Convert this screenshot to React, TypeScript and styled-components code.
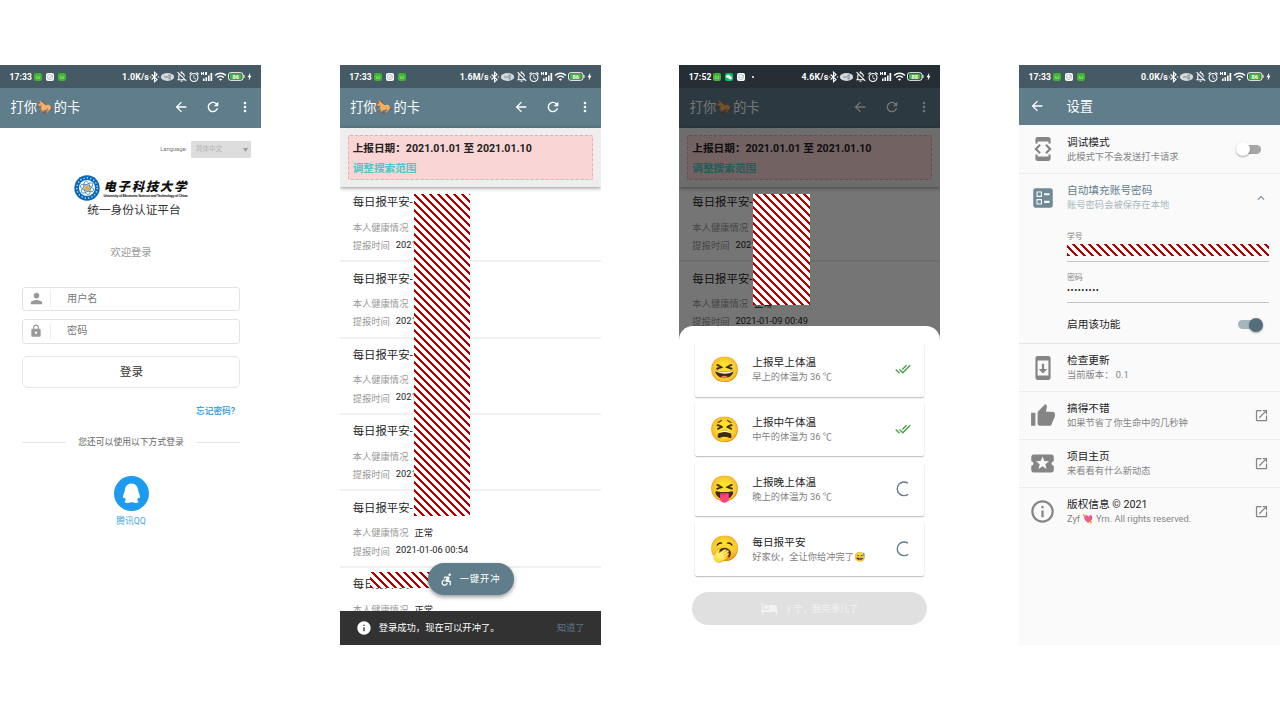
import React from "react";
import styled, { createGlobalStyle, css } from "styled-components";
import {
  MdArrowBack, MdRefresh, MdMoreVert, MdPerson, MdLock, MdInfo, MdHotel, MdDoneAll,
  MdDeveloperMode, MdBallot, MdSystemUpdate, MdThumbUp, MdLocalPlay, MdInfoOutline,
  MdOpenInNew, MdExpandLess, MdOutlineNotificationsOff, MdAlarm, MdWifi,
  MdBolt, MdAccessibleForward,
} from "react-icons/md";

const Global = createGlobalStyle`
  * { box-sizing: border-box; }
  body { margin: 0; background: #fff; font-family: Roboto, "Noto Sans CJK SC", "Noto Color Emoji", sans-serif; }
  svg { display: block; flex: none; }
`;

const Page = styled.main`
  width: 1280px; height: 720px; padding: 65px 0 75px;
  display: flex; justify-content: space-between; overflow: hidden;
`;
const Phone = styled.section<{ $bg?: string }>`
  position: relative; width: 261px; height: 580px; overflow: hidden;
  display: flex; flex-direction: column; background: ${p => p.$bg ?? "#fff"};
`;
const Text = styled.span<{ $s: number; $c?: string; $w?: number; $lh?: number; $ls?: number; $m?: string }>`
  display: block; white-space: nowrap; font-size: ${p => p.$s}px; color: ${p => p.$c ?? "#222"};
  font-weight: ${p => p.$w ?? 400}; line-height: ${p => p.$lh ?? 14}px; letter-spacing: ${p => p.$ls ?? 0}px;
  margin: ${p => p.$m ?? 0};
`;

/* Status bar */
const StatusRow = styled.div<{ $dark?: boolean }>`
  height: 23px; flex: none; display: flex; align-items: center; padding: 0 7px 0 9.5px;
  background: ${p => (p.$dark ? "#242e34" : "#455a64")}; color: #fff;
`;
const Badges = styled.div`display: flex; gap: 4px; margin-left: 2px; flex: 1; align-items: center;`;
const Badge = styled.i<{ $kind: string }>`
  width: 8px; height: 8px; border-radius: 2px; display: grid; place-items: center;
  background: ${p => (p.$kind === "task" ? "#fff" : p.$kind === "chat" ? "#07c160" : "#3fb52f")};
`;
const Tray = styled.div`display: flex; align-items: center;`;
const Dot = styled.i`width: 2px; height: 2px; border-radius: 1px; background: #fff; margin-left: 3px;`;

const BadgeIcon = ({ kind }: { kind: string }) => (
  <Badge $kind={kind}>
    <svg width="8" height="8" viewBox="0 0 8 8" fill="none">
      {kind === "task" && <><circle cx="4" cy="4" r="2.6" stroke="#8fbcf0" strokeWidth=".8" /><path d="M2.7 4l1.1 1.1 2.6-3" stroke="#e6a53a" strokeWidth=".9" /></>}
      {kind === "chat" && <><ellipse cx="3.2" cy="3.4" rx="2.2" ry="1.7" fill="#fff" /><ellipse cx="5.2" cy="5" rx="1.8" ry="1.4" fill="#fff" /></>}
      {kind === "app" && <path d="M2.3 2.8v2.7h3.4V2.8M2.3 3.9h3.4" stroke="#8fe07e" strokeWidth=".7" />}
    </svg>
  </Badge>
);

const StatusBar = ({ time, speed, badges, dark, more }: { time: string; speed: string; badges: string[]; dark?: boolean; more?: boolean }) => (
  <StatusRow $dark={dark}>
    <Text $s={8.6} $c="#fff" $w={700} $lh={12} $ls={0.1}>{time}</Text>
    <Badges>{badges.map((b, i) => <BadgeIcon key={i} kind={b} />)}{more && <Dot />}</Badges>
    <Tray>
      <Text $s={8.8} $c="#fff" $w={700} $lh={12} $ls={0.15}>{speed}</Text>
      <svg width="11" height="12" viewBox="0 0 11 12" fill="none" stroke="#fff" strokeWidth="1.1"><path d="M2.6 3.5l5.4 5-2.500 2.300V1.200L8 3.500l-5.400 5" /><path d="M.8 6h1.400M8.800 6h1.400" /></svg>
      <svg width="15" height="10" viewBox="-.5 0 15 10"><ellipse cx="7" cy="5" rx="6.700" ry="3.900" fill="#d3d9dc" /><path d="M3.500 5h7M8 3.200h2.500M8 6.800h2.500" stroke="#607078" strokeWidth=".8" /></svg>
      <MdOutlineNotificationsOff size={13} />
      <MdAlarm size={12} />
      <svg width="14" height="11" viewBox="0 0 14 11" fill="#fff"><path d="M1 1h1v1h1V1h1v3H3V3H2v1H1zM5 1h2v3H5zM3 7.500h1.600V10H3zM5.500 6.300h1.600V10H5.500zM8 4.500h1.600V10H8zM10.500 2h1.700v8h-1.700z" /></svg>
      <MdWifi size={13} />
      <svg width="18" height="9" viewBox="-1 0 18 9"><rect x=".5" y=".7" width="14.500" height="7.600" rx="2.200" fill="none" stroke="#fff" /><rect x="2" y="2.100" width="11.500" height="4.800" rx=".8" fill="#43b83c" /><path d="M16 3v3" stroke="#fff" /><text x="7.700" y="6.500" textAnchor="middle" fontSize="5.600" fontWeight="700" fill="#fff">{dark ? "88" : "86"}</text></svg>
      <MdBolt size={9} />
    </Tray>
  </StatusRow>
);

/* App bar */
const Bar = styled.header<{ $h?: number }>`
  height: ${p => p.$h ?? 40}px; flex: none; display: flex; align-items: center; color: #fff;
  background: #607d8b; padding: 0 8px 2px 10.5px;
`;
const Actions = styled.div`margin-left: auto; display: flex; align-items: center; gap: 16px;`;
const Emoji = styled.span<{ $s: number }>`font-family: "Noto Color Emoji", sans-serif; font-size: ${p => p.$s}px; line-height: 1;`;
const MainBar = () => (
  <Bar>
    <Text $s={13.2} $c="#fff" $lh={20} $m="2px 0 0">打你<Emoji $s={13.6}>🐎</Emoji>的卡</Text>
    <Actions><MdArrowBack size={16} /><MdRefresh size={16} /><MdMoreVert size={16} /></Actions>
  </Bar>
);

/* Login */
const Login = styled.div`padding: 12px 21px 0 22px; display: flex; flex-direction: column; align-items: center;`;
const Language = styled.div`align-self: flex-end; margin-right: -11px; height: 18px; display: flex; align-items: center; gap: 4px;`;
const Select = styled.div`
  width: 60px; height: 17px; background: #ddd; border-radius: 1px; padding: 0 3px 0 5px;
  display: flex; align-items: center; justify-content: space-between;
`;
const Brand = styled.div`display: flex; align-items: center; gap: 4px; margin-top: 17px; height: 26px;`;
const School = styled.div`display: flex; flex-direction: column; align-items: flex-start; width: 85px;`;
const Calligraphy = styled.span`
  font: italic 900 12.4px/16px "Noto Sans CJK SC", sans-serif; letter-spacing: 1.7px; white-space: nowrap; color: #111;
`;
const English = styled.span`font: 700 3.6px/5px "Liberation Sans Narrow", "Liberation Sans", sans-serif; white-space: nowrap; letter-spacing: -.26px; color: #111;`;
const Field = styled.div`
  width: 218px; height: 24.5px; border: 1.5px solid #e3e3e3; border-radius: 3px; margin-bottom: 8px;
  display: flex; align-items: center; color: #999; padding-left: 5px;
`;
const FieldIcon = styled.span`width: 16px; display: grid; place-items: center;`;
const FieldDivider = styled.i`width: 1px; height: 17px; background: #eee; margin: 0 16px 0 6px;`;
const LoginButton = styled.div`
  width: 218px; height: 32px; border: 1px solid #e8e8e8; border-radius: 6px; margin-top: 4px;
  display: grid; place-items: center;
`;
const Forgot = styled.div`align-self: flex-end; margin: 16px 5px 0 0;`;
const Alternatives = styled.div`width: 218px; display: flex; justify-content: space-between; align-items: center; margin-top: 17.5px;`;
const Rule = styled.i`width: 44px; height: 1px; background: #e4e4e4;`;

const LoginScreen = () => (
  <Phone>
    <StatusBar time="17:33" speed="1.0K/s" badges={["app", "task", "app"]} />
    <MainBar />
    <Login>
      <Language>
        <Text $s={5.8} $c="#777" $lh={8}>Language:</Text>
        <Select><Text $s={6.5} $c="#b4b4b4" $lh={9}>简体中文</Text><Text $s={5} $c="#999" $lh={8}>▼</Text></Select>
      </Language>
      <Brand>
        <svg width="26" height="26" viewBox="0 0 26 26" fill="none">
          <circle cx="13" cy="13" r="12.7" fill="#0868b8" />
          <circle cx="13" cy="13" r="10.2" stroke="#dbe9f5" strokeWidth="1.4" strokeDasharray="1.2 2.2" />
          <circle cx="13" cy="13" r="8" fill="#fff" />
          <g stroke="#2d82c6" strokeWidth=".8"><ellipse cx="13" cy="13" rx="7" ry="3" transform="rotate(20 13 13)" /><ellipse cx="13" cy="13" rx="7" ry="3" transform="rotate(80 13 13)" /><ellipse cx="13" cy="13" rx="7" ry="3" transform="rotate(140 13 13)" /></g>
          <path d="M14 9.3l.7 2.5 2.500.8-2.200 1.300.1 2.700-2.100-1.700-2.500.8.900-2.400-1.500-2.200 2.700.1z" fill="#efa72f" />
        </svg>
        <School><Calligraphy>电子科技大学</Calligraphy><English>University of Electronic Science and Technology of China</English></School>
      </Brand>
      <Text $s={11.7} $c="#333" $lh={18} $m="0 0 0 6px">统一身份认证平台</Text>
      <Text $s={10.3} $c="#999" $lh={16} $m="26px 0 25.5px">欢迎登录</Text>
      <Field><FieldIcon><MdPerson size={17} /></FieldIcon><FieldDivider /><Text $s={10.2} $c="#777">用户名</Text></Field>
      <Field><FieldIcon><MdLock size={14} /></FieldIcon><FieldDivider /><Text $s={10.2} $c="#777">密码</Text></Field>
      <LoginButton><Text $s={11.7} $c="#333" $lh={18} $m="1px 0 0 1px">登录</Text></LoginButton>
      <Forgot><Text $s={8.7} $c="#1b97e0" $w={500}>忘记密码?</Text></Forgot>
      <Alternatives><Rule /><Text $s={8.8} $c="#666">您还可以使用以下方式登录</Text><Rule /></Alternatives>
      <svg width="35" height="35" viewBox="0 0 35 35" style={{ marginTop: 27 }}>
        <circle cx="17.5" cy="17.5" r="17.5" fill="#1d9bf0" />
        <path fill="#fff" d="M17.5 7.5c-4.200 0-6.300 3.100-6.600 6.600-.2 2.300-1.900 4.600-1.900 7 0 1.300.6 1.400 1.700.4.200 1 .7 1.800 1.300 2.500-1.200.5-1.500 1.300-1.300 2 .5 1.300 5.300 1.200 6.800.1 1.500 1.100 6.300 1.200 6.800-.1.200-.7-.1-1.500-1.300-2 .6-.7 1.100-1.500 1.300-2.500 1.100 1 1.700.9 1.700-.4 0-2.400-1.700-4.700-1.900-7-.3-3.500-2.400-6.600-6.600-6.600z" />
      </svg>
      <Text $s={8.7} $c="#41a8e5" $m="3px 0 0">腾讯QQ</Text>
    </Login>
  </Phone>
);

/* Report list */
const hatch = css`background: repeating-linear-gradient(45deg, #b00000 0 2.4px, #fff 2.4px 5.657px);`;
const Search = styled.div`
  position: relative; z-index: 1; height: 59px; flex: none; background: #eee; padding: 7px 8px;
  box-shadow: 0 1px 4px rgba(0,0,0,.45);
`;
const Range = styled.div`height: 45px; border: 1px dashed #efa9ab; border-radius: 2px; background: #fad5d5; padding: 2.5px 4px;`;
const Item = styled.div`height: 76.4px; flex: none; border-bottom: 2px solid #f0f0f0; padding: 8.5px 13px 0 13px;`;
const Line = styled.div`display: flex; gap: 6px; height: 18.5px; align-items: center;`;
const Redaction = styled.div<{ $x: number; $y: number; $w: number; $h: number }>`
  position: absolute; z-index: 3; left: ${p => p.$x}px; top: ${p => p.$y}px; width: ${p => p.$w}px; height: ${p => p.$h}px;
  ${hatch}
`;
const Items = styled.div`display: flex; flex-direction: column; margin-top: -1.2px;`;

const Reports = ({ times }: { times: string[] }) => (
  <>
    <Search>
      <Range>
        <Text $s={10.65} $w={700} $lh={20}>上报日期：2021.01.01 至 2021.01.10</Text>
        <Text $s={10.65} $w={700} $c="#4fc6c8" $lh={20}>调整搜索范围</Text>
      </Range>
    </Search>
    <Items>
      {times.map((t, i) => (
        <Item key={i}>
          <Text $s={11.4} $lh={16} $m="0 0 8px">每日报平安-</Text>
          <Line><Text $s={9.3} $c="#999">本人健康情况</Text><Text $s={9.25}>正常</Text></Line>
          {t && <Line><Text $s={9.3} $c="#999">提报时间</Text><Text $s={9.3} $m="-3px 0 0">{t}</Text></Line>}
        </Item>
      ))}
    </Items>
  </>
);

const Fab = styled.div`
  position: absolute; z-index: 4; left: 88px; top: 498px; width: 86px; height: 32px; border-radius: 16px;
  background: #607d8b; color: #fff; display: flex; align-items: center; gap: 6px; padding-left: 11px;
  box-shadow: 0 2px 4px rgba(0,0,0,.4);
`;
const Snackbar = styled.div`
  position: absolute; z-index: 4; left: 0; right: 0; bottom: 0; height: 34px; background: #323232; color: #fff;
  display: flex; align-items: center; padding: 0 16px; gap: 7px;
`;
const Grow = styled.div`flex: 1;`;

const ReportScreen = () => (
  <Phone>
    <StatusBar time="17:33" speed="1.6M/s" badges={["app", "task", "app"]} />
    <MainBar />
    <Reports times={["2021-01-10 00:49", "2021-01-09 00:49", "2021-01-08 00:52", "2021-01-07 00:51", "2021-01-06 00:54", ""]} />
    <Redaction $x={74} $y={129} $w={56} $h={322} />
    <Redaction $x={30} $y={507} $w={60} $h={16} />
    <Fab><MdAccessibleForward size={15} /><Text $s={9.3} $c="#fff" $ls={0.9}>一键开冲</Text></Fab>
    <Snackbar>
      <MdInfo size={16} />
      <Text $s={9.3} $c="#fff">登录成功，现在可以开冲了。</Text>
      <Grow />
      <Text $s={9.3} $c="#5b7784">知道了</Text>
    </Snackbar>
  </Phone>
);

/* Progress sheet */
const Scrim = styled.div`position: absolute; z-index: 2; inset: 23px 0 0; background: rgba(0,0,0,.54);`;
const Sheet = styled.div`
  position: absolute; z-index: 4; left: 0; right: 0; bottom: 0; height: 319px; background: #fff;
  border-radius: 14px 14px 0 0; padding: 16px 13px 0; display: flex; flex-direction: column; align-items: center;
`;
const Card = styled.div`
  width: 229px; height: 54.5px; margin-bottom: 5.3px; border-radius: 2px; background: #fff; flex: none;
  box-shadow: 0 1px 1.5px rgba(0,0,0,.28);
  display: flex; align-items: center; padding: 0 14px;
`;
const Face = styled.div`width: 30px; margin-right: 13px; display: grid; place-items: center;`;
const CardText = styled.div`padding-top: 2px;`;
const State = styled.div`margin-left: auto; margin-right: -1px; color: #43a047; width: 16px; display: grid; place-items: center;`;
const Done = styled.div`
  width: 235px; height: 33px; margin-top: 11px; border-radius: 17px; background: #e0e0e0; color: #f2f2f2;
  display: flex; align-items: center; justify-content: center; gap: 6px; flex: none;
`;
const steps = [
  { face: "😆", title: "上报早上体温", note: "早上的体温为 36 ℃", done: true },
  { face: "😫", title: "上报中午体温", note: "中午的体温为 36 ℃", done: true },
  { face: "😝", title: "上报晚上体温", note: "晚上的体温为 36 ℃", done: false },
  { face: "🥱", title: "每日报平安", note: "好家伙，全让你给冲完了", done: false, tail: "😅" },
];
const ProgressScreen = () => (
  <Phone>
    <StatusBar dark more time="17:52" speed="4.6K/s" badges={["app", "chat", "task"]} />
    <MainBar />
    <Reports times={["2021-01-10 00:49", "2021-01-09 00:49"]} />
    <Scrim />
    <Redaction $x={74} $y={129} $w={57} $h={111} />
    <Sheet>
      {steps.map(s => (
        <Card key={s.title}>
          <Face><Emoji $s={25}>{s.face}</Emoji></Face>
          <CardText>
            <Text $s={10.65}>{s.title}</Text>
            <Text $s={9.25} $c="#808080">{s.note}{s.tail && <Emoji $s={9.4}>{s.tail}</Emoji>}</Text>
          </CardText>
          <State>
            {s.done ? <MdDoneAll size={16} /> : (
              <svg width="16" height="16" viewBox="0 0 16 16" fill="none"><path d="M13 2.300A6.800 6.800 0 1 0 13.200 13.200" stroke="#607d8b" strokeWidth="1.400" /></svg>
            )}
          </State>
        </Card>
      ))}
      <Done><MdHotel size={17} /><Text $s={9.25} $c="#f2f2f2">彳亍，我完事儿了</Text></Done>
    </Sheet>
  </Phone>
);

/* Settings */
const Setting = styled.div<{ $h?: number }>`
  height: ${p => p.$h ?? 48}px; flex: none; display: flex; align-items: center; padding: 0 11px 0 12px;
  border-bottom: 1px solid #ececec; color: #858585;
  &:last-child { border-bottom: 0; padding-bottom: 1px; }
`;
const Lead = styled.div`width: 24px; margin-right: 12px; display: flex; justify-content: center;`;
const Trail = styled.div`margin-left: auto;`;
const Toggle = styled.div<{ $on?: boolean; $gap?: number }>`
  width: 25px; height: 14px; margin: 0 ${p => p.$gap ?? 0}px 0 auto; display: flex; align-items: center;
  justify-content: ${p => (p.$on ? "flex-end" : "flex-start")}; position: relative;
  &::before {
    content: ""; position: absolute; top: 2.5px; height: 9px; width: 22px; border-radius: 5px;
    ${p => (p.$on ? "left: 0; background: #a5b5bd;" : "right: 0; background: #a6a6a6;")}
  }
`;
const Knob = styled.i<{ $on?: boolean }>`
  position: relative; width: 14px; height: 14px; border-radius: 50%; background: ${p => (p.$on ? "#546e7a" : "#fff")};
  box-shadow: 0 1px 2px rgba(0,0,0,.35);
`;
const Account = styled.div`height: 170px; flex: none; border-bottom: 1px solid #e3e3e3;`;
const AccountHead = styled.div`height: 48px; display: flex; align-items: center; padding: 0 12px; color: #6f8a97;`;
const Input = styled.div<{ $h: number; $top: number }>`
  margin: 0 11px 0 48px; height: ${p => p.$h}px; padding-top: ${p => p.$top}px; border-bottom: 1.5px solid #c4c4c4;
`;
const Hidden = styled.div`height: 12px; margin-top: 1px; ${hatch}`;
const Enable = styled.div`height: 43px; padding: 0 17px 0 48px; display: flex; align-items: center;`;

const SettingsScreen = () => {
  const rows = [
    { icon: <MdSystemUpdate size={26} />, title: "检查更新", note: <>当前版本： 0.1</>, link: false },
    { icon: <MdThumbUp size={26} />, title: "搞得不错", note: <>如果节省了你生命中的几秒钟</>, link: true },
    { icon: <MdLocalPlay size={27} />, title: "项目主页", note: <>来看看有什么新动态</>, link: true },
    { icon: <MdInfoOutline size={27} />, title: "版权信息 © 2021", note: <>Zyf <Emoji $s={9}>💘</Emoji> Yrn. All rights reserved.</>, link: true },
  ];
  return (
    <Phone $bg="#fafafa">
      <StatusBar time="17:33" speed="0.0K/s" badges={["app", "task", "app"]} />
      <Bar $h={37}><MdArrowBack size={16} /><Text $s={13.3} $c="#fff" $lh={20} $m="3px 0 0 21px">设置</Text></Bar>
      <Setting $h={49}>
        <Lead><MdDeveloperMode size={26} /></Lead>
        <div><Text $s={10.7} $m="2px 0 0">调试模式</Text><Text $s={9.3} $c="#858585">此模式下不会发送打卡请求</Text></div>
        <Toggle $gap={8}><Knob /></Toggle>
      </Setting>
      <Account>
        <AccountHead>
          <Lead><MdBallot size={26} /></Lead>
          <div><Text $s={10.7} $c="#607d8b">自动填充账号密码</Text><Text $s={9.3} $c="#a8b8c0">账号密码会被保存在本地</Text></div>
          <Trail><MdExpandLess size={14} /></Trail>
        </AccountHead>
        <Input $h={39.5} $top={9}><Text $s={7.9} $c="#858585" $lh={12}>学号</Text><Hidden /></Input>
        <Input $h={41.5} $top={10.5}><Text $s={7.9} $c="#858585" $lh={12}>密码</Text><Text $s={8.9} $c="#111" $lh={13} $ls={0.6}>•••••••••</Text></Input>
        <Enable><Text $s={10.7}>启用该功能</Text><Toggle $on><Knob $on /></Toggle></Enable>
      </Account>
      {rows.map(r => (
        <Setting key={r.title}>
          <Lead>{r.icon}</Lead>
          <div><Text $s={10.7} $m="1px 0 0">{r.title}</Text><Text $s={9.3} $c="#858585">{r.note}</Text></div>
          {r.link && <Trail><MdOpenInNew size={15} /></Trail>}
        </Setting>
      ))}
    </Phone>
  );
};

export default function App() {
  return (
    <><Global /><Page><LoginScreen /><ReportScreen /><ProgressScreen /><SettingsScreen /></Page></>
  );
}
